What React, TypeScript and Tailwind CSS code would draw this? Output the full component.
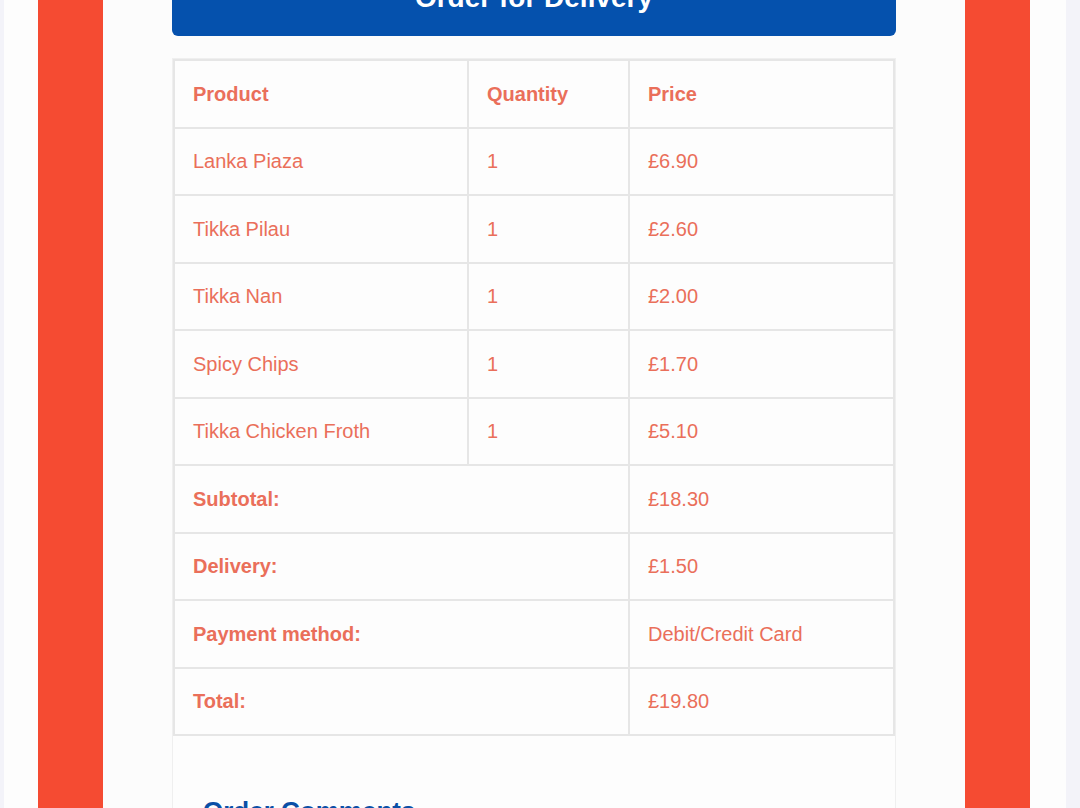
import React from "react";

const items = [
	{ name: "Lanka Piaza", qty: 1, price: "£6.90" },
	{ name: "Tikka Pilau", qty: 1, price: "£2.60" },
	{ name: "Tikka Nan", qty: 1, price: "£2.00" },
	{ name: "Spicy Chips", qty: 1, price: "£1.70" },
	{ name: "Tikka Chicken Froth", qty: 1, price: "£5.10" },
];

const totals = [
	{ label: "Subtotal:", value: "£18.30" },
	{ label: "Delivery:", value: "£1.50" },
	{ label: "Payment method:", value: "Debit/Credit Card" },
	{ label: "Total:", value: "£19.80" },
];

const cell = "border-2 border-[#e6e6e6] h-[67.5px] px-[18px] align-middle";

export default function App() {
	return (
		<div
			className="min-h-screen bg-[#f3f3f9] pl-[4px] pr-[14px] overflow-hidden"
			style={{ fontFamily: '"Liberation Sans", Arial, sans-serif' }}
		>
			<div className="min-h-screen bg-[#fdfdfd] pl-[34px] pr-[36px]">
				<div className="min-h-screen bg-[#f54b32] px-[65px]">
					<div className="min-h-screen bg-[#fcfcfc] px-[69px]">
						<div className="-mt-[36px] h-[72px] bg-[#0551ad] rounded-b-[6px] flex items-start justify-center pt-[20px]">
							<h1 className="text-white font-bold text-[28px] leading-none">
								Order for Delivery
							</h1>
						</div>

						<div className="mt-[22px] border border-[#efefef] bg-[#fdfdfd]">
							<table className="w-full border-collapse text-[20px] text-[#ea6f5a]">
								<thead>
									<tr className="font-bold">
										<td className={`${cell} w-[294px]`}>Product</td>
										<td className={`${cell} w-[161px]`}>Quantity</td>
										<td className={cell}>Price</td>
									</tr>
								</thead>
								<tbody>
									{items.map((item, i) => (
										<tr key={i}>
											<td className={cell}>{item.name}</td>
											<td className={cell}>{item.qty}</td>
											<td className={cell}>{item.price}</td>
										</tr>
									))}
									{totals.map((row, i) => (
										<tr key={i}>
											<td colSpan={2} className={`${cell} font-bold`}>
												{row.label}
											</td>
											<td className={cell}>{row.value}</td>
										</tr>
									))}
								</tbody>
							</table>

							<div className="px-[30px] pt-[56px] pb-10">
								<h2 className="text-[#0a4fa6] font-bold text-[26px]">
									Order Comments
								</h2>
							</div>
						</div>
					</div>
				</div>
			</div>
		</div>
	);
}
